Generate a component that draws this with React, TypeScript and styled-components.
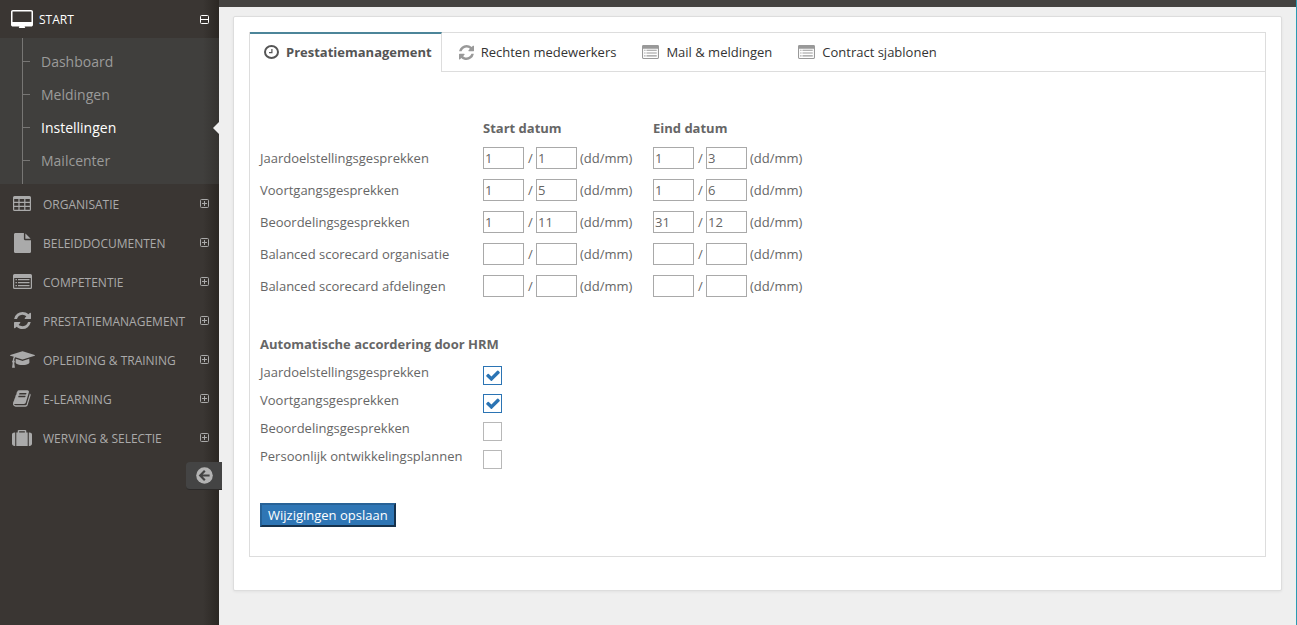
import React, { useState } from "react";
import styled, { createGlobalStyle } from "styled-components";

const GlobalStyle = createGlobalStyle`
  *, *::before, *::after { box-sizing: border-box; }
  body {
    margin: 0;
    background: #efefef;
    color: #666;
    font-family: "Open Sans", "Liberation Sans", sans-serif;
    font-size: 13px;
    line-height: 20px;
  }
  input, button { font-family: inherit; font-size: inherit; color: inherit; }
  a { color: inherit; text-decoration: none; }
`;

/* ---------- icons ---------- */

type IconProps = { width: number; height: number };

const Svg = styled.svg`
  display: block;
  flex: none;
  fill: currentColor;
`;

const DesktopIcon = ({ width, height }: IconProps) => (
  <Svg width={width} height={height} viewBox="0 0 1856 1536" preserveAspectRatio="none" aria-hidden>
    <path d="M1728 992v-832q0-13-9.500-22.500t-22.500-9.500h-1536q-13 0-22.500 9.500t-9.500 22.500v832q0 13 9.500 22.500t22.500 9.500h1536q13 0 22.500-9.500t9.500-22.500zm128-832v1088q0 66-47 113t-113 47h-544q0 26 16 60t48 68q0 26-19 45t-45 19h-448q-26 0-45-19t-19-45q32-34 48-68t16-60h-544q-66 0-113-47t-47-113v-1088q0-66 47-113t113-47h1536q66 0 113 47t47 113z" />
  </Svg>
);

const TableIcon = ({ width, height }: IconProps) => (
  <Svg width={width} height={height} viewBox="0 0 18 15" aria-hidden>
    <path
      fillRule="evenodd"
      d="M1.500 0h15A1.500 1.500 0 0 1 18 1.500v12a1.500 1.500 0 0 1-1.500 1.500h-15A1.500 1.500 0 0 1 0 13.500v-12A1.500 1.500 0 0 1 1.500 0zM1.200 3h4.200v2.800H1.200zM6.600 3h4.600v2.800H6.600zM12.400 3h4.400v2.800h-4.400zM1.200 7h4.200v2.800H1.200zM6.600 7h4.600v2.800H6.600zM12.400 7h4.400v2.800h-4.400zM1.200 11h4.200v2.800H1.200zM6.600 11h4.600v2.800H6.600zM12.400 11h4.400v2.800h-4.400z"
    />
  </Svg>
);

const FileIcon = ({ width, height }: IconProps) => (
  <Svg width={width} height={height} viewBox="128 0 1536 1792" aria-hidden>
    <path d="M1152 512v-472q22 14 36 28l408 408q14 14 28 36h-472zm-128 32q0 40 28 68t68 28h544v1056q0 40-28 68t-68 28h-1344q-40 0-68-28t-28-68v-1600q0-40 28-68t68-28h800v544z" />
  </Svg>
);

const ListIcon = ({ width, height }: IconProps) => (
  <Svg width={width} height={height} viewBox="0 0 19 15" preserveAspectRatio="none" aria-hidden>
    <path
      fillRule="evenodd"
      d="M1.500 0h16A1.500 1.500 0 0 1 19 1.500v12a1.500 1.500 0 0 1-1.500 1.500h-16A1.500 1.500 0 0 1 0 13.500v-12A1.500 1.500 0 0 1 1.500 0zM1.200 4v9.400q0 .4.400.4h15.800q.4 0 .4-.4V4z"
    />
    <path d="M2.500 5h1.400v1.200H2.500zM5 5h11.500v1.200H5zM2.500 8h1.400v1.200H2.500zM5 8h11.500v1.200H5zM2.500 11h1.400v1.200H2.500zM5 11h11.500v1.200H5z" />
  </Svg>
);

const RefreshIcon = ({ width, height }: IconProps) => (
  <Svg width={width} height={height} viewBox="0 0 1536 1536" aria-hidden>
    <path d="M1511 928q0 5-1 7q-64 268-268 434.500t-478 166.500q-146 0-282.500-55t-243.500-157l-129 129q-19 19-45 19t-45-19t-19-45v-448q0-26 19-45t45-19h448q26 0 45 19t19 45t-19 45l-137 137q71 66 161 102t187 36q134 0 250-65t186-179q11-17 53-117q8-23 30-23h192q13 0 22.500 9.500t9.500 22.500zM1536 128v448q0 26-19 45t-45 19h-448q-26 0-45-19t-19-45t19-45l138-138q-148-137-349-137q-134 0-250 65t-186 179q-11 17-53 117q-8 23-30 23h-199q-13 0-22.500-9.500t-9.500-22.500v-7q65-268 270-434.500t480-166.500q146 0 284 55.500t245 156.500l130-129q19-19 45-19t45 19t19 45z" />
  </Svg>
);

const GraduationIcon = ({ width, height }: IconProps) => (
  <Svg width={width} height={height} viewBox="0 128 2304 1536" aria-hidden>
    <path d="M1774 836l18 316q4 69-82 128t-235 93.500-323 34.500-323-34.500-235-93.500-82-128l18-316 574 181q22 7 48 7t48-7zM2304 512q0 23-22 31l-1120 352q-4 1-10 1t-10-1l-652-206q-43 34-71 111.500t-34 178.500q63 36 63 109 0 69-58 107l58 433q2 14-8 25-9 11-24 11h-192q-15 0-24-11-10-11-8-25l58-433q-58-38-58-107 0-73 65-111 11-207 98-330l-333-104q-22-8-22-31t22-31l1120-352q4-1 10-1t10 1l1120 352q22 8 22 31z" />
  </Svg>
);

const BookIcon = ({ width, height }: IconProps) => (
  <Svg width={width} height={height} viewBox="0 128 1792 1536" aria-hidden>
    <path d="M1639 478q40 57 18 129l-275 906q-19 64-76.500 107.500t-122.500 43.500h-923q-77 0-148.500-53.500t-99.500-131.500q-24-67-2-127 0-4 3-27t4-37q1-8-3-21.500t-3-19.500q2-11 8-21t16.500-23.500 16.500-23.500q23-38 45-91.500t30-91.500q3-10 .5-30t-.5-28q3-11 17-28t17-23q21-36 42-92t25-90q1-9-2.500-32t.5-28q4-13 22-30.500t22-22.500q19-26 42.500-84.500t27.500-96.500q1-8-3-25.500t-2-26.500q2-8 9-18t18-23 17-21q8-12 16.500-30.500t15-35 16-36 19.500-32 26.500-23.500 36-11.500 47.500 5.500l-1 3q38-9 51-9h761q74 0 114 56t18 130l-274 906q-36 119-71.500 153.500t-128.500 34.500h-869q-27 0-38 15-11 16-1 43 24 70 144 70h923q29 0 56-15.500t35-41.500l300-987q7-22 5-57 38 15 59 43zm-1064 2q-4 13 2 22.500t20 9.500h608q13 0 25.500-9.500t16.500-22.500l21-64q4-13-2-22.500t-20-9.500h-608q-13 0-25.500 9.500t-16.500 22.500zm-83 256q-4 13 2 22.500t20 9.500h608q13 0 25.500-9.500t16.500-22.500l21-64q4-13-2-22.500t-20-9.500h-608q-13 0-25.500 9.500t-16.500 22.500z" />
  </Svg>
);

const SuitcaseIcon = ({ width, height }: IconProps) => (
  <Svg width={width} height={height} viewBox="0 0 1792 1664" preserveAspectRatio="none" aria-hidden>
    <path d="M640 256h512v-128h-512v128zm-352 0v1408h-64q-92 0-158-66t-66-158v-960q0-92 66-158t158-66h64zm1120 0v1408h-1024v-1408h128v-160q0-40 28-68t68-28h576q40 0 68 28t28 68v160h128zm384 224v960q0 92-66 158t-158 66h-64v-1408h64q92 0 158 66t66 158z" />
  </Svg>
);

const ClockIcon = ({ width, height }: IconProps) => (
  <Svg width={width} height={height} viewBox="0 0 15 14" preserveAspectRatio="none" aria-hidden>
    <ellipse cx="7.500" cy="7" rx="6.500" ry="6" fill="none" stroke="currentColor" strokeWidth="2" />
    <path d="M7.900 4v3.600H5" fill="none" stroke="currentColor" strokeWidth="1.200" />
  </Svg>
);

const ArrowCircleIcon = ({ width, height }: IconProps) => (
  <Svg width={width} height={height} viewBox="0 0 17 17" aria-hidden>
    <circle cx="8.500" cy="8.500" r="8.300" />
    <path d="M8.800 3.800L4.200 8.500l4.600 4.700M4.400 8.500h9.200" fill="none" stroke="#444" strokeWidth="2.200" />
  </Svg>
);

const ToggleIcon = ({ open }: { open?: boolean }) => (
  <Svg width={9} height={9} viewBox="0 0 9 9" aria-hidden>
    <rect x=".5" y=".5" width="8" height="8" rx="1" fill="none" stroke="currentColor" />
    <path d={open ? "M1 4h7v1H1z" : "M2 4h5v1H2zM4 2h1v5H4z"} />
  </Svg>
);

const CheckIcon = () => (
  <Svg width={14} height={11} viewBox="121 270 1550 1252" aria-hidden>
    <path d="M1671 566q0 40-28 68l-724 724-136 136q-28 28-68 28t-68-28l-136-136-362-362q-28-28-28-68t28-68l136-136q28-28 68-28t68 28l294 295 656-657q28-28 68-28t68 28l136 136q28 28 28 68z" />
  </Svg>
);

/* ---------- page frame ---------- */

const Page = styled.div`
  display: flex;
  min-height: 100vh;
  border-right: 1px solid #2b9bb3;
`;

const Sidebar = styled.nav`
  position: relative;
  flex: none;
  width: 219px;
  background: linear-gradient(to left, #2b2723, #3a3633 16px);
`;

const Content = styled.main`
  flex: 1;
  min-width: 0;
  border-top: 7px solid #454341;
  padding: 9px 14px 34px;
`;

/* ---------- sidebar ---------- */

const MenuIcon = styled.span`
  display: flex;
  justify-content: center;
  flex: none;
  width: 28px;
`;

const MenuLink = styled.a<{ $open?: boolean }>`
  display: flex;
  align-items: center;
  gap: ${(p) => (p.$open ? 3 : 7)}px;
  height: ${(p) => (p.$open ? 38 : 39)}px;
  padding: 0 10px 0 8px;
  color: ${(p) => (p.$open ? "#fff" : "#aaa")};
`;

const MenuText = styled.span`
  flex: 1;
  padding-top: 2px;
  font-size: 12px;
  white-space: nowrap;
`;

const SubMenu = styled.ul`
  position: relative;
  margin: 0;
  padding: 7px 0;
  list-style: none;
  background: linear-gradient(to left, #353330, #403f3d 16px);
  &::before {
    content: "";
    position: absolute;
    top: 0;
    bottom: 0;
    left: 22px;
    width: 1px;
    background: #777674;
  }
`;

const SubLink = styled.a<{ $active?: boolean }>`
  position: relative;
  display: block;
  padding: 0 0 0 41px;
  font-size: 14px;
  line-height: 33px;
  color: ${(p) => (p.$active ? "#fff" : "#9b9b9a")};
  &::before {
    content: "";
    position: absolute;
    top: 16px;
    left: 23px;
    width: 7px;
    height: 1px;
    background: #777674;
  }
  &::after {
    content: "";
    display: ${(p) => (p.$active ? "block" : "none")};
    position: absolute;
    top: 11px;
    right: 0;
    border: 6px solid transparent;
    border-left-width: 0;
    border-right-color: #efefef;
  }
`;

const CollapseButton = styled.button`
  position: absolute;
  top: 462px;
  right: -3px;
  display: flex;
  align-items: center;
  justify-content: center;
  width: 36px;
  height: 28px;
  padding: 0 0 1px;
  border: 0;
  border-bottom: 1px solid #2c2a29;
  border-radius: 4px 0 0 4px;
  background: #444;
  color: #b3b3b3;
`;

/* ---------- card and tabs ---------- */

const Card = styled.section`
  padding: 15px 15px 33px;
  border: 1px solid #ddd;
  border-radius: 2px;
  background: #fff;
  box-shadow: 0 1px 3px rgba(0, 0, 0, 0.06);
`;

const Panel = styled.div`
  border: 1px solid #ddd;
`;

const TabBar = styled.div`
  display: flex;
  height: 39px;
  border-bottom: 1px solid #ddd;
`;

const Tab = styled.button<{ $active?: boolean }>`
  display: flex;
  align-items: center;
  gap: 7px;
  height: ${(p) => (p.$active ? 40 : 38)}px;
  margin: ${(p) => (p.$active ? "-1px 6px 0 0" : "0")};
  padding: ${(p) => (p.$active ? "0 9px 2px 14px" : "0 15px 0 11px")};
  border: 0 solid #ddd;
  border-width: ${(p) => (p.$active ? "2px 1px 0 0" : "0")};
  border-top-color: #4c8599;
  background: #fff;
  color: ${(p) => (p.$active ? "#555" : "#333")};
  font-weight: ${(p) => (p.$active ? 700 : 400)};
  white-space: nowrap;
  svg { color: ${(p) => (p.$active ? "#555" : "#999")}; }
`;

const Form = styled.form`
  padding: 41px 10px 29px;
`;

/* ---------- form ---------- */

const DateTable = styled.table`
  border-collapse: collapse;
  table-layout: fixed;
  width: 563px;
  th, td { height: 32px; padding: 0; text-align: left; font-weight: 400; white-space: nowrap; }
  thead th, thead td { height: 29px; font-weight: 700; }
`;

const LabelCol = styled.col`
  width: 223px;
`;

const DateField = styled.div`
  display: flex;
  align-items: center;
`;

const DateInput = styled.input`
  width: 41px;
  height: 22px;
  padding: 1px;
  border: 1px solid #a9a9a9;
  border-radius: 0;
  background: #fff;
`;

const Slash = styled.span`
  width: 12px;
  padding-left: 4px;
`;

const Hint = styled.span`
  padding-left: 3px;
`;

const ApprovalGroup = styled.fieldset`
  margin: 32px 0 0;
  padding: 0;
  border: 0;
`;

const GroupTitle = styled.legend`
  padding: 0 0 8px;
  font-weight: 700;
`;

const ApprovalRow = styled.div`
  display: flex;
  align-items: flex-start;
  height: 28px;
`;

const ApprovalLabel = styled.label`
  width: 223px;
`;

const CheckWrap = styled.span`
  position: relative;
  margin-top: 4px;
  color: #2b74b4;
  svg {
    position: absolute;
    top: 4px;
    left: 3px;
    pointer-events: none;
  }
`;

const CheckBox = styled.input`
  display: block;
  width: 19px;
  height: 19px;
  margin: 0;
  appearance: none;
  border: 1px solid #b8b8b8;
  background: #fff;
  &:checked { border-color: #2b74b4; }
`;

const SaveButton = styled.button`
  display: block;
  height: 24px;
  margin: 29px 0 0;
  padding: 0 6px;
  border: 2px solid;
  border-color: #276297 #16324d #16324d #276297;
  background: #2f76b5;
  color: #fff;
  line-height: 20px;
`;

/* ---------- data ---------- */

const subItems = ["Dashboard", "Meldingen", "Instellingen", "Mailcenter"];

const menuItems = [
  { label: "ORGANISATIE", icon: <TableIcon width={18} height={15} /> },
  { label: "BELEIDDOCUMENTEN", icon: <FileIcon width={17} height={20} /> },
  { label: "COMPETENTIE", icon: <ListIcon width={19} height={15} /> },
  { label: "PRESTATIEMANAGEMENT", icon: <RefreshIcon width={17} height={17} /> },
  { label: "OPLEIDING & TRAINING", icon: <GraduationIcon width={25} height={17} /> },
  { label: "E-LEARNING", icon: <BookIcon width={19} height={17} /> },
  { label: "WERVING & SELECTIE", icon: <SuitcaseIcon width={20} height={16} /> },
];

const tabs = [
  { label: "Prestatiemanagement", icon: <ClockIcon width={15} height={14} /> },
  { label: "Rechten medewerkers", icon: <RefreshIcon width={15} height={15} /> },
  { label: "Mail & meldingen", icon: <ListIcon width={17} height={14} /> },
  { label: "Contract sjablonen", icon: <ListIcon width={17} height={14} /> },
];

const periods = [
  { label: "Jaardoelstellingsgesprekken", start: ["1", "1"], end: ["1", "3"] },
  { label: "Voortgangsgesprekken", start: ["1", "5"], end: ["1", "6"] },
  { label: "Beoordelingsgesprekken", start: ["1", "11"], end: ["31", "12"] },
  { label: "Balanced scorecard organisatie", start: ["", ""], end: ["", ""] },
  { label: "Balanced scorecard afdelingen", start: ["", ""], end: ["", ""] },
];

const approvals = [
  { label: "Jaardoelstellingsgesprekken", checked: true },
  { label: "Voortgangsgesprekken", checked: true },
  { label: "Beoordelingsgesprekken", checked: false },
  { label: "Persoonlijk ontwikkelingsplannen", checked: false },
];

const DayMonth = ({ name, value }: { name: string; value: string[] }) => (
  <DateField>
    <DateInput aria-label={`${name} dag`} defaultValue={value[0]} />
    <Slash>/</Slash>
    <DateInput aria-label={`${name} maand`} defaultValue={value[1]} />
    <Hint>(dd/mm)</Hint>
  </DateField>
);

const Approval = ({ id, label, initial }: { id: string; label: string; initial: boolean }) => {
  const [checked, setChecked] = useState(initial);
  return (
    <ApprovalRow>
      <ApprovalLabel htmlFor={id}>{label}</ApprovalLabel>
      <CheckWrap>
        <CheckBox id={id} type="checkbox" checked={checked} onChange={() => setChecked(!checked)} />
        {checked && <CheckIcon />}
      </CheckWrap>
    </ApprovalRow>
  );
};

export default function App() {
  const [active, setActive] = useState(0);
  return (
    <>
      <GlobalStyle />
      <Page>
        <Sidebar>
          <MenuLink href="#start" $open>
            <MenuIcon>
              <DesktopIcon width={22} height={18} />
            </MenuIcon>
            <MenuText>START</MenuText>
            <ToggleIcon open />
          </MenuLink>
          <SubMenu>
            {subItems.map((item) => (
              <li key={item}>
                <SubLink href={`#${item.toLowerCase()}`} $active={item === "Instellingen"}>
                  {item}
                </SubLink>
              </li>
            ))}
          </SubMenu>
          {menuItems.map((item) => (
            <MenuLink key={item.label} href="#menu">
              <MenuIcon>{item.icon}</MenuIcon>
              <MenuText>{item.label}</MenuText>
              <ToggleIcon />
            </MenuLink>
          ))}
          <CollapseButton type="button" aria-label="Menu inklappen">
            <ArrowCircleIcon width={17} height={17} />
          </CollapseButton>
        </Sidebar>
        <Content>
          <Card>
            <Panel>
              <TabBar role="tablist">
                {tabs.map((tab, i) => (
                  <Tab
                    key={tab.label}
                    type="button"
                    role="tab"
                    aria-selected={i === active}
                    $active={i === active}
                    onClick={() => setActive(i)}
                  >
                    {tab.icon}
                    {tab.label}
                  </Tab>
                ))}
              </TabBar>
              <Form onSubmit={(e) => e.preventDefault()}>
                <DateTable>
                  <colgroup>
                    <LabelCol />
                    <col />
                    <col />
                  </colgroup>
                  <thead>
                    <tr>
                      <td />
                      <th scope="col">Start datum</th>
                      <th scope="col">Eind datum</th>
                    </tr>
                  </thead>
                  <tbody>
                    {periods.map((p) => (
                      <tr key={p.label}>
                        <th scope="row">{p.label}</th>
                        <td>
                          <DayMonth name={`${p.label} start`} value={p.start} />
                        </td>
                        <td>
                          <DayMonth name={`${p.label} eind`} value={p.end} />
                        </td>
                      </tr>
                    ))}
                  </tbody>
                </DateTable>
                <ApprovalGroup>
                  <GroupTitle>Automatische accordering door HRM</GroupTitle>
                  {approvals.map((a, i) => (
                    <Approval key={a.label} id={`approval-${i}`} label={a.label} initial={a.checked} />
                  ))}
                </ApprovalGroup>
                <SaveButton type="submit">Wijzigingen opslaan</SaveButton>
              </Form>
            </Panel>
          </Card>
        </Content>
      </Page>
    </>
  );
}
